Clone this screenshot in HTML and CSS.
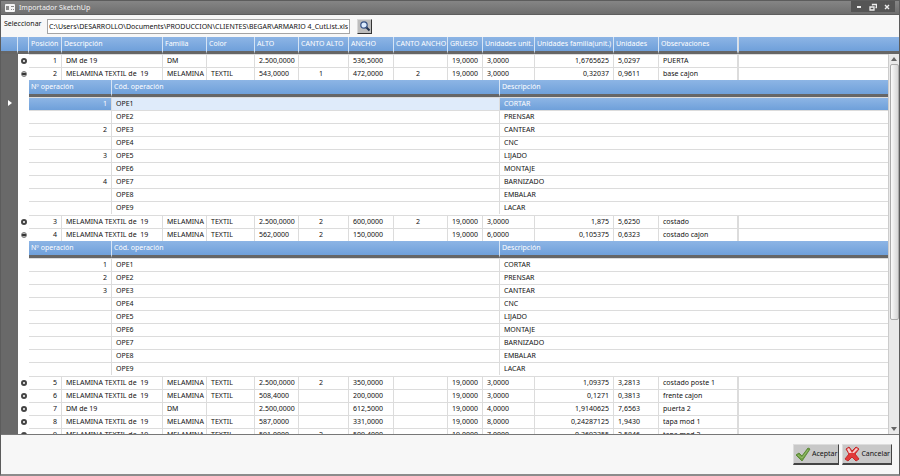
FILE: index.html
```html
<!DOCTYPE html>
<html lang="es">

<head>
    <meta charset="UTF-8">
    <meta name="viewport" content="width=device-width, initial-scale=1.0">
    <title>Importador SketchUp</title>
    <link rel="stylesheet" href="styles.css">
</head>

<body>
    <div class="window">
        <header class="titlebar">
            <svg class="app-icon" viewBox="0 0 10 8">
                <rect width="10" height="8" rx="1" fill="#f4f4f4"/>
                <path d="M1 2h3v4h-3zM6 2h3v1h-3zM6 5h1v1h-1zM8 5h1v1h-1z" fill="#8a8a8a"/>
            </svg>
            <h1 class="title">Importador SketchUp</h1>
            <div class="window-buttons">
                <button type="button" aria-label="Minimizar"><svg viewBox="0 0 8 8"><path d="M2 4h4" stroke-width="2"/></svg></button>
                <button type="button" aria-label="Restaurar"><svg viewBox="0 0 8 8"><path d="M3.500 2.500v-1h4v3h-1M1 4h4v3h-4z" stroke-width="1.300"/></svg></button>
                <button type="button" aria-label="Cerrar"><svg viewBox="0 0 8 8"><path d="M2 2l4 4M6 2l-4 4" stroke-width="1.400"/></svg></button>
            </div>
        </header>

        <div class="toolbar">
            <label for="file-path">Seleccionar</label>
            <input class="path" id="file-path" type="text" value="C:\Users\DESARROLLO\Documents\PRODUCCION\CLIENTES\BEGAR\ARMARIO 4_CutList.xls">
            <button class="browse" type="button" aria-label="Buscar">
                <svg viewBox="0 0 12 12">
                    <path d="M7 7l3.500 3.500" stroke="#22324f" stroke-width="2"/>
                    <circle cx="5" cy="5" r="3.200" fill="#dcecff" stroke="#345083" stroke-width="1.200"/>
                </svg>
            </button>
        </div>

        <main class="grid">
            <table class="master">
                <colgroup>
                    <col class="w-gutter"><col class="w-toggle"><col class="w-pos"><col class="w-desc"><col class="w-fam">
                    <col class="w-color"><col class="w-alto"><col class="w-canto"><col class="w-ancho"><col class="w-canto-ancho">
                    <col class="w-grueso"><col class="w-unit"><col class="w-unit-fam"><col class="w-unid"><col class="w-obs"><col>
                </colgroup>
                <thead>
                    <tr><th></th><th></th><th>Posición</th><th>Descripción</th><th>Familia</th><th>Color</th><th>ALTO</th><th>CANTO ALTO</th><th>ANCHO</th><th>CANTO ANCHO</th><th>GRUESO</th><th>Unidades unit.</th><th>Unidades familia(unit.)</th><th>Unidades</th><th>Observaciones</th><th class="rest"></th></tr>
                </thead>
                <tbody>
                    <tr><td class="gutter"></td><td class="toggle"><button class="knob" type="button" aria-label="Expandir"></button></td><td class="num">1</td><td>DM de 19</td><td>DM</td><td></td><td>2.500,0000</td><td class="mid"></td><td>536,5000</td><td class="mid"></td><td>19,0000</td><td>3,0000</td><td class="num">1,6765625</td><td>5,0297</td><td>PUERTA</td><td class="rest"></td></tr>
                    <tr><td class="gutter"></td><td class="toggle"><button class="knob open" type="button" aria-label="Contraer"></button></td><td class="num">2</td><td>MELAMINA TEXTIL de&nbsp; 19</td><td>MELAMINA</td><td>TEXTIL</td><td>543,0000</td><td class="mid">1</td><td>472,0000</td><td class="mid">2</td><td>19,0000</td><td>3,0000</td><td class="num">0,32037</td><td>0,9611</td><td>base cajon</td><td class="rest"></td></tr>
                    <tr class="detail-row">
                        <td class="gutter current"><svg viewBox="0 0 4 6"><path d="M0 0l4 3l-4 3z" fill="#fff"/></svg></td>
                        <td class="toggle"></td>
                        <td class="nested" colspan="14">
                            <table class="detail">
                                <colgroup><col class="w-op"><col class="w-code"><col></colgroup>
                                <thead><tr><th>Nº operación</th><th>Cód. operación</th><th>Descripción</th></tr></thead>
                                <tbody>
                                    <tr class="selected"><td class="num">1</td><td class="focused">OPE1</td><td>CORTAR</td></tr>
                                    <tr><td class="num"></td><td>OPE2</td><td>PRENSAR</td></tr>
                                    <tr><td class="num">2</td><td>OPE3</td><td>CANTEAR</td></tr>
                                    <tr><td class="num"></td><td>OPE4</td><td>CNC</td></tr>
                                    <tr><td class="num">3</td><td>OPE5</td><td>LIJADO</td></tr>
                                    <tr><td class="num"></td><td>OPE6</td><td>MONTAJE</td></tr>
                                    <tr><td class="num">4</td><td>OPE7</td><td>BARNIZADO</td></tr>
                                    <tr><td class="num"></td><td>OPE8</td><td>EMBALAR</td></tr>
                                    <tr><td class="num"></td><td>OPE9</td><td>LACAR</td></tr>
                                </tbody>
                            </table>
                        </td>
                    </tr>
                    <tr><td class="gutter"></td><td class="toggle"><button class="knob" type="button" aria-label="Expandir"></button></td><td class="num">3</td><td>MELAMINA TEXTIL de&nbsp; 19</td><td>MELAMINA</td><td>TEXTIL</td><td>2.500,0000</td><td class="mid">2</td><td>600,0000</td><td class="mid">2</td><td>19,0000</td><td>3,0000</td><td class="num">1,875</td><td>5,6250</td><td>costado</td><td class="rest"></td></tr>
                    <tr><td class="gutter"></td><td class="toggle"><button class="knob open" type="button" aria-label="Contraer"></button></td><td class="num">4</td><td>MELAMINA TEXTIL de&nbsp; 19</td><td>MELAMINA</td><td>TEXTIL</td><td>562,0000</td><td class="mid">2</td><td>150,0000</td><td class="mid"></td><td>19,0000</td><td>6,0000</td><td class="num">0,105375</td><td>0,6323</td><td>costado cajon</td><td class="rest"></td></tr>
                    <tr class="detail-row">
                        <td class="gutter"></td>
                        <td class="toggle"></td>
                        <td class="nested" colspan="14">
                            <table class="detail">
                                <colgroup><col class="w-op"><col class="w-code"><col></colgroup>
                                <thead><tr><th>Nº operación</th><th>Cód. operación</th><th>Descripción</th></tr></thead>
                                <tbody>
                                    <tr><td class="num">1</td><td>OPE1</td><td>CORTAR</td></tr>
                                    <tr><td class="num">2</td><td>OPE2</td><td>PRENSAR</td></tr>
                                    <tr><td class="num">3</td><td>OPE3</td><td>CANTEAR</td></tr>
                                    <tr><td class="num"></td><td>OPE4</td><td>CNC</td></tr>
                                    <tr><td class="num"></td><td>OPE5</td><td>LIJADO</td></tr>
                                    <tr><td class="num"></td><td>OPE6</td><td>MONTAJE</td></tr>
                                    <tr><td class="num"></td><td>OPE7</td><td>BARNIZADO</td></tr>
                                    <tr><td class="num"></td><td>OPE8</td><td>EMBALAR</td></tr>
                                    <tr><td class="num"></td><td>OPE9</td><td>LACAR</td></tr>
                                </tbody>
                            </table>
                        </td>
                    </tr>
                    <tr><td class="gutter"></td><td class="toggle"><button class="knob" type="button" aria-label="Expandir"></button></td><td class="num">5</td><td>MELAMINA TEXTIL de&nbsp; 19</td><td>MELAMINA</td><td>TEXTIL</td><td>2.500,0000</td><td class="mid">2</td><td>350,0000</td><td class="mid"></td><td>19,0000</td><td>3,0000</td><td class="num">1,09375</td><td>3,2813</td><td>costado poste 1</td><td class="rest"></td></tr>
                    <tr><td class="gutter"></td><td class="toggle"><button class="knob" type="button" aria-label="Expandir"></button></td><td class="num">6</td><td>MELAMINA TEXTIL de&nbsp; 19</td><td>MELAMINA</td><td>TEXTIL</td><td>508,4000</td><td class="mid"></td><td>200,0000</td><td class="mid"></td><td>19,0000</td><td>3,0000</td><td class="num">0,1271</td><td>0,3813</td><td>frente cajon</td><td class="rest"></td></tr>
                    <tr><td class="gutter"></td><td class="toggle"><button class="knob" type="button" aria-label="Expandir"></button></td><td class="num">7</td><td>DM de 19</td><td>DM</td><td></td><td>2.500,0000</td><td class="mid"></td><td>612,5000</td><td class="mid"></td><td>19,0000</td><td>4,0000</td><td class="num">1,9140625</td><td>7,6563</td><td>puerta 2</td><td class="rest"></td></tr>
                    <tr><td class="gutter"></td><td class="toggle"><button class="knob" type="button" aria-label="Expandir"></button></td><td class="num">8</td><td>MELAMINA TEXTIL de&nbsp; 19</td><td>MELAMINA</td><td>TEXTIL</td><td>587,0000</td><td class="mid"></td><td>331,0000</td><td class="mid"></td><td>19,0000</td><td>8,0000</td><td class="num">0,24287125</td><td>1,9430</td><td>tapa mod 1</td><td class="rest"></td></tr>
                    <tr><td class="gutter"></td><td class="toggle"><button class="knob" type="button" aria-label="Expandir"></button></td><td class="num">9</td><td>MELAMINA TEXTIL de&nbsp; 19</td><td>MELAMINA</td><td>TEXTIL</td><td>591,0000</td><td class="mid">2</td><td>509,4000</td><td class="mid"></td><td>19,0000</td><td>7,0000</td><td class="num">0,3692355</td><td>2,5846</td><td>tapa mod 2</td><td class="rest"></td></tr>
                </tbody>
            </table>
            <div class="scrollbar">
                <svg class="arrow" viewBox="0 0 6 6"><path d="M3 1l3 4h-6z"/></svg>
                <div class="thumb"></div>
                <svg class="arrow" viewBox="0 0 6 6"><path d="M0 1h6l-3 4z"/></svg>
            </div>
        </main>

        <footer class="actions">
            <button class="action" type="button">
                <svg viewBox="0 0 16 16">
                    <path d="M1 9l3-2l3 3l6-8l2 1l-8 12z" fill="#6f9f45" stroke="#5d8a38"/>
                    <path d="M3 9l4 3l6-8" fill="none" stroke="#97bf6c"/>
                </svg>
                Aceptar
            </button>
            <button class="action" type="button">
                <svg viewBox="0 0 16 16">
                    <path d="M2 3l3-2l3 4l4-4l3 2l-4 5l4 5l-3 2l-4-4l-4 4l-3-2l4-5z" fill="#e23a3a" stroke="#c52a2a"/>
                    <path d="M3 3l2-1l3 5l4-5l2 1l-4 4h-5z" fill="#f6d0d0"/>
                </svg>
                Cancelar
            </button>
        </footer>
    </div>
</body>

</html>
```
FILE: styles.css
```css
* {
    box-sizing: border-box;
}

body {
    margin: 0;
    font-family: "Noto Sans", "Open Sans", sans-serif;
    font-size: 7px;
    line-height: 12px;
    color: #111;
}

button, input {
    font: inherit;
    color: inherit;
    margin: 0;
    padding: 0;
}

.window {
    display: flex;
    flex-direction: column;
    height: 100vh;
    border: 1px solid #5c5c5c;
    border-bottom: 2px solid #8c8c8c;
    background: #f7f7f7;
}

/* Title bar */
.titlebar {
    display: flex;
    align-items: center;
    gap: 4px;
    height: 14px;
    padding: 0 4px;
    background: linear-gradient(#858585, #6e6e6e);
    border-bottom: 1px solid #5e5e5e;
    color: #f2f2f2;
}

.app-icon {
    width: 10px;
    height: 8px;
}

.title {
    flex: 1;
    margin: 0;
    font-size: 7px;
    font-weight: normal;
}

.window-buttons {
    display: flex;
    align-self: flex-start;
    height: 11px;
    padding: 0 1px;
    background: #555;
}

.window-buttons button {
    display: flex;
    align-items: center;
    justify-content: center;
    width: 14px;
    border: 0;
    background: none;
}

.window-buttons svg {
    width: 8px;
    height: 8px;
    fill: none;
    stroke: #eee;
}

/* File selector */
.toolbar {
    display: flex;
    align-items: center;
    height: 22px;
    padding: 0 3px;
}

.toolbar label {
    width: 43px;
    padding-bottom: 4px;
    white-space: nowrap;
}

.path {
    width: 303px;
    height: 15px;
    padding: 0 1px;
    border: 1px solid #a5a5a5;
    background: #fff;
}

.browse {
    display: flex;
    align-items: center;
    justify-content: center;
    width: 15px;
    height: 15px;
    margin-left: 7px;
    border: 1px solid #d8d8d8;
    border-right-color: #333;
    border-bottom-color: #333;
    background: #bdbdbd;
}

.browse svg {
    width: 12px;
    height: 12px;
    flex: none;
}

/* Grid */
.grid {
    position: relative;
    flex: 1;
    min-height: 0;
    overflow: hidden;
    background: #fff;
    border-bottom: 1px solid #777;
}

table {
    width: 100%;
    table-layout: fixed;
    border-collapse: separate;
    border-spacing: 0;
}

th, td {
    height: 13px;
    padding: 0 4px;
    overflow: hidden;
    white-space: nowrap;
    text-align: left;
    line-height: 12px;
}

td {
    border-right: 1px solid #dcdcdc;
    border-top: 1px solid #dcdcdc;
}

th {
    height: 17px;
    padding: 0 2px;
    border-right: 1px solid #d5e4f5;
    border-bottom: 3px solid #666;
    background: linear-gradient(#8db5e5, #6fa0da);
    color: #fff;
    font-weight: normal;
}

th:last-child, td:last-child {
    border-right: 0;
}

.rest {
    border-left: 1px solid #dcdcdc;
}

.w-gutter { width: 17px; }
.w-toggle { width: 11px; }
.w-pos { width: 33px; }
.w-desc { width: 101px; }
.w-fam { width: 44px; }
.w-color { width: 48px; }
.w-alto { width: 44px; }
.w-canto { width: 50px; }
.w-ancho { width: 45px; }
.w-canto-ancho { width: 54px; }
.w-grueso { width: 35px; }
.w-unit { width: 52px; }
.w-unit-fam { width: 79px; }
.w-unid { width: 45px; }
.w-obs { width: 79px; }
.w-op { width: 83px; }
.w-code { width: 388px; }

.num {
    text-align: right;
}

.mid {
    padding-right: 9px;
    text-align: center;
}

.gutter {
    padding: 0;
    border: 0;
    background: #696969;
}

.current {
    padding: 20px 0 0 7px;
    vertical-align: top;
}

.current svg {
    display: block;
    width: 4px;
    height: 6px;
}

.toggle {
    padding: 0 3px;
    border: 0;
}

.knob {
    display: block;
    width: 6px;
    height: 6px;
    border: 2px solid #444;
    border-radius: 3px;
    background: #fff;
}

.open {
    border: 1px solid #777;
    background: linear-gradient(#bbb 1px, #333 1px, #333 3px, #bbb 3px);
}

.nested {
    padding: 0 10px 1px 0;
}

.detail-row > td {
    border-top: 0;
}

.selected td {
    background: linear-gradient(#8db5e5, #6fa0da);
    color: #fff;
}

.selected .focused {
    background: #dfebfa;
    color: #111;
}

/* Scrollbar, over the right edge of the rows */
.scrollbar {
    position: absolute;
    top: 17px;
    right: 0;
    bottom: 0;
    display: flex;
    flex-direction: column;
    align-items: center;
    width: 11px;
    padding: 2px 1px;
    border-left: 1px solid #ccc;
    background: #e9e9e9;
}

.arrow {
    width: 6px;
    height: 6px;
    flex: none;
    fill: #666;
}

.thumb {
    width: 9px;
    height: 68%;
    margin: 2px 0 auto;
    border: 1px solid #aaa;
    border-radius: 2px;
    background: linear-gradient(90deg, #fafafa, #d5d5d5);
}

/* Footer */
.actions {
    display: flex;
    justify-content: flex-end;
    gap: 3px;
    height: 39px;
    padding: 9px 7px;
}

.action {
    display: flex;
    align-items: center;
    gap: 1px;
    height: 21px;
    padding: 0 1px;
    border: 1px solid #ddd;
    border-right-color: #444;
    border-bottom: 2px solid #444;
    background: #c8c8c8;
}

.action svg {
    width: 16px;
    height: 16px;
}
```
